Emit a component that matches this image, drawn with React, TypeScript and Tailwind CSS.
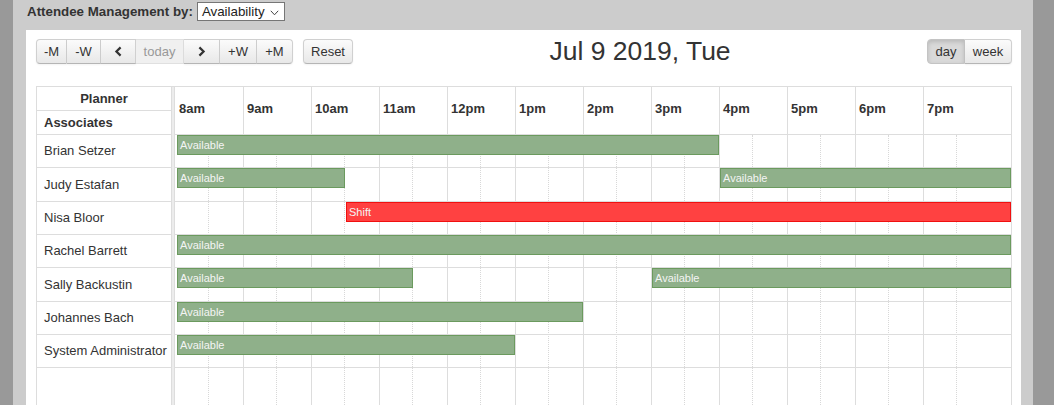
import React from "react";

const HOURS = ["8am", "9am", "10am", "11am", "12pm", "1pm", "2pm", "3pm", "4pm", "5pm", "6pm", "7pm"];
const PX = 68;
const MAXR = 836;

type Ev = { start: number; end: number; label: string; shift?: boolean };
const ROWS: { name: string; events: Ev[] }[] = [
  { name: "Brian Setzer", events: [{ start: 8, end: 16, label: "Available" }] },
  {
    name: "Judy Estafan",
    events: [
      { start: 8, end: 10.5, label: "Available" },
      { start: 16, end: 22, label: "Available" },
    ],
  },
  { name: "Nisa Bloor", events: [{ start: 10.5, end: 22, label: "Shift", shift: true }] },
  { name: "Rachel Barrett", events: [{ start: 8, end: 22, label: "Available" }] },
  {
    name: "Sally Backustin",
    events: [
      { start: 8, end: 11.5, label: "Available" },
      { start: 15, end: 22, label: "Available" },
    ],
  },
  { name: "Johannes Bach", events: [{ start: 8, end: 14, label: "Available" }] },
  { name: "System Administrator", events: [{ start: 8, end: 13, label: "Available" }] },
];

const btnBase =
  "h-[25px] flex items-center justify-center text-[13px] text-[#333] border-y border-r border-[#d0d0d0] border-b-[#b5b5b5] bg-linear-to-b from-[#fbfbfb] to-[#e8e8e8] shadow-[0_1px_2px_rgba(0,0,0,0.05)]";

function Chevron({ dir }: { dir: "l" | "r" }) {
  return (
    <svg width="9" height="11" viewBox="0 0 9 11" className="block">
      <path
        d={dir === "l" ? "M6.6 1.4 L2.4 5.5 L6.6 9.6" : "M2.4 1.4 L6.6 5.5 L2.4 9.6"}
        fill="none"
        stroke="#333"
        strokeWidth="2.2"
      />
    </svg>
  );
}

function GridLines() {
  return (
    <div className="absolute inset-0 flex">
      {HOURS.map((h, i) => (
        <div
          key={h}
          className={
            (i === HOURS.length - 1 ? "flex-1 " : "w-[68px] flex-none ") +
            (i === 0 ? "" : "border-l border-[#ddd] ") +
            "h-full"
          }
        >
          <div className={(i === 0 ? "w-[34px] " : "w-[33px] ") + "h-full border-r border-dotted border-[#d8d8d8]"} />
        </div>
      ))}
    </div>
  );
}

export default function App() {
  return (
    <div className="w-[1054px] h-[405px] bg-[#999] overflow-hidden flex font-['Liberation_Sans',Arial,sans-serif] text-[#333]">
      <div className="ml-[13px] w-[1020px] h-full bg-[#ccc] flex flex-col pl-[13px]">
        {/* top bar */}
        <div className="h-[30px] pb-[7px] flex items-center pl-[1px] gap-[4px]">
          <span className="text-[13.33px] font-bold text-[#333]">Attendee Management by:</span>
          <div className="h-[19px] w-[88px] bg-white border border-[#767676] flex items-center pl-[4px] pr-[5px] justify-between text-[13.33px] text-[#222]">
            <span>Availability</span>
            <svg width="9" height="6" viewBox="0 0 9 6" className="block mt-[2px]">
              <path d="M0.8 0.8 L4.5 4.8 L8.2 0.8" fill="none" stroke="#444" strokeWidth="1" />
            </svg>
          </div>
        </div>

        {/* white panel */}
        <div className="w-[995px] flex-1 bg-white pt-[9px] pl-[10px] pr-[9px] flex flex-col">
          {/* toolbar */}
          <div className="h-[25px] flex items-center mb-[22px]">
            <div className="flex items-center">
              <div className="flex">
                <button className={btnBase + " w-[31px] border-l rounded-l-[4px]"}>-M</button>
                <button className={btnBase + " w-[34px]"}>-W</button>
                <button className={btnBase + " w-[35px]"}>
                  <Chevron dir="l" />
                </button>
                <button className="h-[25px] w-[48px] flex items-center justify-center text-[13px] text-[#999] border-y border-r border-[#e0e0e0] bg-[#f0f0f0]">
                  today
                </button>
                <button className={btnBase + " w-[36px]"}>
                  <Chevron dir="r" />
                </button>
                <button className={btnBase + " w-[37px]"}>+W</button>
                <button className={btnBase + " w-[36px] rounded-r-[4px]"}>+M</button>
              </div>
              <button className={btnBase + " w-[50px] ml-[10px] border-l rounded-[4px]"}>Reset</button>
            </div>
            <div className="flex-1 flex justify-center">
              <h2 className="text-[26.5px] leading-[29px] text-[#333] whitespace-nowrap">Jul 9 2019, Tue</h2>
            </div>
            <div className="flex">
              <button className="h-[25px] w-[38px] flex items-center justify-center text-[13px] text-[#333] border border-[#c4c4c4] rounded-l-[4px] bg-[#d9d9d9] shadow-[inset_0_2px_4px_rgba(0,0,0,0.15)]">
                day
              </button>
              <button className={btnBase + " w-[47px] rounded-r-[4px]"}>week</button>
            </div>
          </div>

          {/* grid */}
          <div className="flex-1 flex">
            {/* resource column */}
            <div className="w-[135px] flex-none border-l border-t border-[#ddd] flex flex-col">
              <div className="h-[24px] border-b border-[#ddd] flex items-center justify-center text-[13px] font-bold">
                Planner
              </div>
              <div className="h-[24px] border-b border-[#ddd] flex items-center pl-[7px] text-[13px] font-bold">
                Associates
              </div>
              {ROWS.map((r) => (
                <div
                  key={r.name}
                  className="h-[33.33px] border-b border-[#ddd] flex items-center pl-[7px] text-[13px] whitespace-nowrap"
                >
                  {r.name}
                </div>
              ))}
            </div>
            {/* divider */}
            <div className="w-[4px] flex-none border-x border-t border-[#ddd] bg-[#ececec]" />
            {/* time area */}
            <div className="flex-1 border-t border-r border-[#ddd] flex flex-col">
              <div className="h-[48px] flex-none border-b border-[#ddd] flex">
                {HOURS.map((h, i) => (
                  <div
                    key={h}
                    className={
                      (i === HOURS.length - 1 ? "flex-1 " : "w-[68px] flex-none ") +
                      (i === 0 ? "pl-[4px] " : "border-l border-[#ddd] pl-[3px] ") +
                      "flex items-center pb-[3px] text-[13px] font-bold"
                    }
                  >
                    {h}
                  </div>
                ))}
              </div>
              <div className="relative flex-1">
                <GridLines />
                <div className="relative">
                  {ROWS.map((r) => (
                    <div key={r.name} className="relative h-[33.33px] border-b border-[#ddd]">
                      {r.events.map((e, j) => {
                        const left = (e.start - 8) * PX + (e.start === 8 ? 2 : 1);
                        const right = Math.min((e.end - 8) * PX, MAXR);
                        return (
                          <div
                            key={j}
                            className={
                              "absolute top-0 h-[20px] border pl-[2px] pt-[2px] text-[11px] leading-[14px] text-[#f4f4f4] overflow-hidden whitespace-nowrap " +
                              (e.shift
                                ? "bg-[#ff4141] border-[#f01010]"
                                : "bg-[#8fb08a] border-[#6b9a5e]")
                            }
                            style={{ left: left, width: right - left }}
                          >
                            {e.label}
                          </div>
                        );
                      })}
                    </div>
                  ))}
                </div>
              </div>
            </div>
          </div>
        </div>
      </div>
    </div>
  );
}
